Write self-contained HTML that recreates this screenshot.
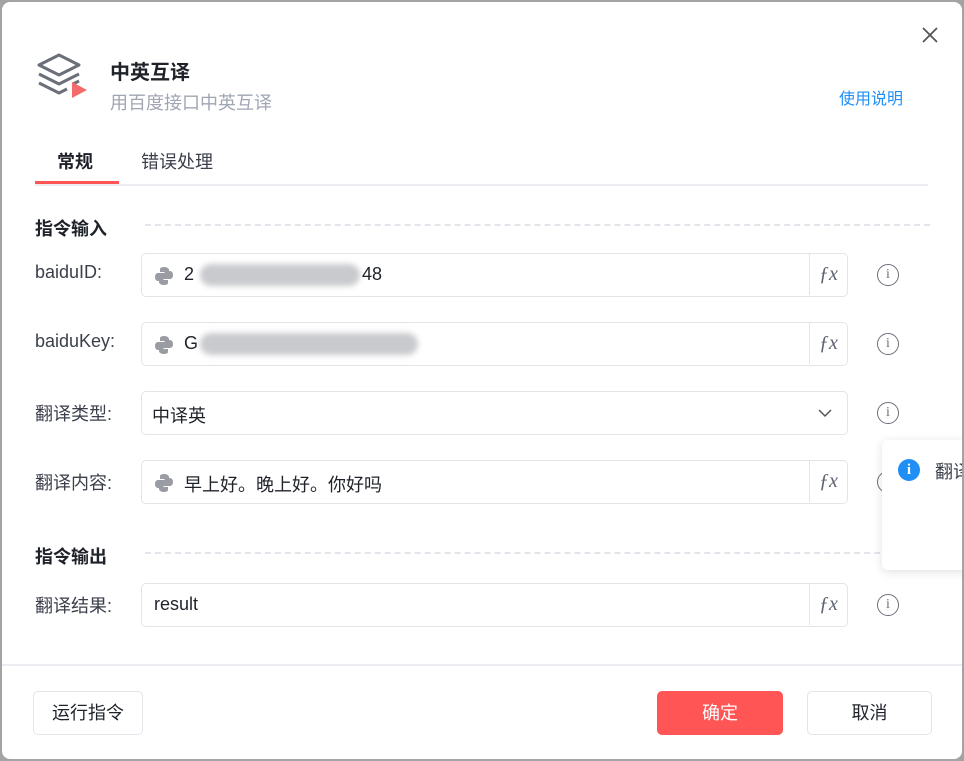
<!DOCTYPE html>
<html><head><meta charset="utf-8"><style>
*{box-sizing:border-box;margin:0;padding:0}
body{width:964px;height:761px;background:#a3a3a3;position:relative;overflow:hidden;font-family:"Liberation Sans","Noto Sans CJK SC",sans-serif;color:#1f2329}
.dlg{position:absolute;left:2px;top:2px;width:960px;height:757px;background:#fff;border-radius:8px;overflow:hidden}
.a{position:absolute}
.lbl{position:absolute;left:33px;font-size:18px;color:#3a3f4a}
.inp{position:absolute;left:139px;width:707px;height:44px;border:1.5px solid #e3e4ea;border-radius:5px;background:#fff}
.fx{position:absolute;right:0;top:0;width:38px;height:41px;border-left:1.5px solid #e3e4ea;font-family:"Liberation Serif",serif;font-style:italic;font-size:20px;color:#5d6270;text-align:center;line-height:40px}
.val{position:absolute;left:42px;top:10px;font-size:18px;color:#1f2329}
.py{position:absolute;left:12px;top:12px}
.info{position:absolute;left:875px;width:22px;height:22px;border:1.5px solid #6b6f78;border-radius:50%;font-family:"Liberation Serif",serif;font-size:14px;color:#6b6f78;text-align:center;line-height:19px}
.sec{position:absolute;left:33px;font-size:18px;font-weight:bold;color:#1f2329}
.dash{position:absolute;left:143px;right:32px;border-top:2px dashed #e3e5ea}
.blur{position:absolute;height:22px;background:#c9cacd;border-radius:11px;filter:blur(3px)}
.btn{position:absolute;top:689px;height:44px;border:1.5px solid #e3e4ea;border-radius:5px;font-size:18px;text-align:center;line-height:42px;color:#1f2329;background:#fff}
</style></head><body>
<div class="dlg">
<svg class="a" style="left:34px;top:50px" width="54" height="50" viewBox="0 0 54 50">
<path d="M3 13 L23 3 L43 13 L23 23 Z" fill="none" stroke="#6b6f78" stroke-width="3" stroke-linejoin="round"/>
<path d="M3 22 L23 32 L43 22" fill="none" stroke="#6b6f78" stroke-width="3" stroke-linejoin="round"/>
<path d="M3 31 L23 41 L31 37" fill="none" stroke="#6b6f78" stroke-width="3" stroke-linejoin="round"/>
<path d="M37 32 L43 29" stroke="#6b6f78" stroke-width="3"/>
<path d="M36 30 L51 38 L36 46 Z" fill="#f56b6b"/>
</svg>
<div class="a" style="left:108px;top:54px;font-size:20px;font-weight:bold">中英互译</div>
<div class="a" style="left:108px;top:87px;font-size:18px;color:#a0a6b3">用百度接口中英互译</div>
<div class="a" style="left:837px;top:83px;font-size:16px;color:#1f8ff5">使用说明</div>
<svg class="a" style="left:919px;top:24px" width="18" height="18"><path d="M2 2L16 16M16 2L2 16" stroke="#555" stroke-width="1.8"/></svg>
<div class="a" style="left:55px;top:146px;font-size:18px;font-weight:bold">常规</div>
<div class="a" style="left:139px;top:146px;font-size:18px;color:#3a3f4a">错误处理</div>
<div class="a" style="left:33px;top:179px;width:84px;height:3px;background:#f55"></div>
<div class="a" style="left:33px;top:182px;width:893px;height:1.5px;background:#ececf1"></div>

<div class="sec" style="top:213px">指令输入</div><div class="dash" style="top:222px"></div>
<div class="lbl" style="top:260px">baiduID:</div>
<div class="inp" style="top:251px"><svg class="py" width="20" height="20" viewBox="0 0 20 20"><path d="M10 1c-4 0-4 2-4 2v3h4.5v1H4S1 7 1 11s3 4 3 4h2v-3s0-2 2-2h5s2 0 2-2V4s0-3-5-3z" fill="#9a9ca3"/><path d="M10 19c4 0 4-2 4-2v-3H9.5v-1H16s3 0 3-4-3-4-3-4h-2v3s0 2-2 2H7s-2 0-2 2v4s0 3 5 3z" fill="#9a9ca3"/></svg><span class="val">2</span><div class="blur" style="left:58px;top:10px;width:160px"></div><span class="val" style="left:220px">48</span><div class="fx">ƒx</div></div>
<div class="info" style="top:262px">i</div>

<div class="lbl" style="top:329px">baiduKey:</div>
<div class="inp" style="top:320px"><svg class="py" width="20" height="20" viewBox="0 0 20 20"><path d="M10 1c-4 0-4 2-4 2v3h4.5v1H4S1 7 1 11s3 4 3 4h2v-3s0-2 2-2h5s2 0 2-2V4s0-3-5-3z" fill="#9a9ca3"/><path d="M10 19c4 0 4-2 4-2v-3H9.5v-1H16s3 0 3-4-3-4-3-4h-2v3s0 2-2 2H7s-2 0-2 2v4s0 3 5 3z" fill="#9a9ca3"/></svg><span class="val">G</span><div class="blur" style="left:58px;top:10px;width:218px"></div><div class="fx">ƒx</div></div>
<div class="info" style="top:331px">i</div>

<div class="lbl" style="top:398px">翻译类型:</div>
<div class="inp" style="top:389px"><span class="val" style="left:10px">中译英</span><svg class="a" style="left:676px;top:16px" width="14" height="10"><path d="M1 2l6 6 6-6" fill="none" stroke="#555" stroke-width="1.5"/></svg></div>
<div class="info" style="top:400px">i</div>

<div class="lbl" style="top:467px">翻译内容:</div>
<div class="inp" style="top:458px"><svg class="py" width="20" height="20" viewBox="0 0 20 20"><path d="M10 1c-4 0-4 2-4 2v3h4.5v1H4S1 7 1 11s3 4 3 4h2v-3s0-2 2-2h5s2 0 2-2V4s0-3-5-3z" fill="#9a9ca3"/><path d="M10 19c4 0 4-2 4-2v-3H9.5v-1H16s3 0 3-4-3-4-3-4h-2v3s0 2-2 2H7s-2 0-2 2v4s0 3 5 3z" fill="#9a9ca3"/></svg><span class="val">早上好。晚上好。你好吗</span><div class="fx">ƒx</div></div>
<div class="info" style="top:469px">i</div>

<div class="sec" style="top:541px">指令输出</div><div class="dash" style="top:550px"></div>
<div class="lbl" style="top:590px">翻译结果:</div>
<div class="inp" style="top:581px"><span class="val" style="left:12px">result</span><div class="fx">ƒx</div></div>
<div class="info" style="top:592px">i</div>

<div class="a" style="left:0;top:662px;width:960px;height:1.5px;background:#ececf1"></div>
<div class="btn" style="left:31px;width:110px">运行指令</div>
<div class="btn" style="left:655px;width:126px;background:#f55;border-color:#f55;color:#fff">确定</div>
<div class="btn" style="left:805px;width:125px">取消</div>

<div class="a" style="left:880px;top:438px;width:100px;height:130px;background:#fff;border-radius:6px;box-shadow:0 2px 10px rgba(0,0,0,.12)">
<div class="a" style="left:16px;top:19px;width:22px;height:22px;border-radius:50%;background:#1f8ff5;color:#fff;font-weight:bold;font-size:15px;text-align:center;line-height:22px;font-family:'Liberation Serif',serif">i</div>
<div class="a" style="left:53px;top:18px;font-size:18px;color:#3a3f4a;white-space:nowrap">翻译</div>
</div>
</div>
</body></html>
